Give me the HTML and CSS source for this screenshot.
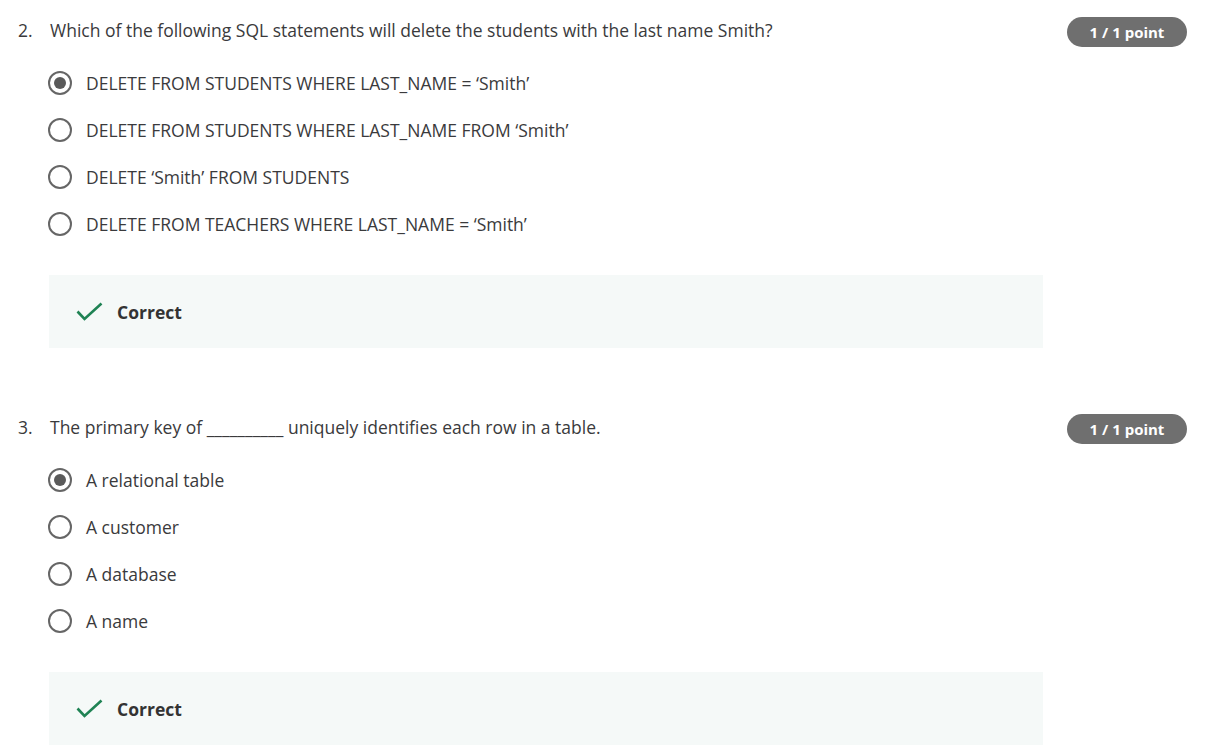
FILE: index.html
```html
<!DOCTYPE html>
<html>
<head>
<meta charset="utf-8">
<link rel="stylesheet" href="styles.css">
</head>
<body>
<div class="page">
  <section class="question">
    <div class="q-head">
      <span class="q-num">2.</span>
      <span class="q-text">Which of the following SQL statements will delete the students with the last name Smith?</span>
      <span class="badge">1 / 1 point</span>
    </div>
    <ul class="options">
      <li class="option"><span class="radio checked"></span><span class="opt-text">DELETE FROM STUDENTS WHERE LAST_NAME = ‘Smith’</span></li>
      <li class="option"><span class="radio"></span><span class="opt-text">DELETE FROM STUDENTS WHERE LAST_NAME FROM ‘Smith’</span></li>
      <li class="option"><span class="radio"></span><span class="opt-text">DELETE ‘Smith’ FROM STUDENTS</span></li>
      <li class="option"><span class="radio"></span><span class="opt-text">DELETE FROM TEACHERS WHERE LAST_NAME = ‘Smith’</span></li>
    </ul>
    <div class="feedback">
      <svg class="check" width="27" height="20" viewBox="0 0 27 20"><polyline points="1.5,9.5 8.5,17 25.5,1.5" fill="none" stroke="#1f8354" stroke-width="2.6"/></svg>
      <span class="fb-text">Correct</span>
    </div>
  </section>
  <section class="question">
    <div class="q-head">
      <span class="q-num">3.</span>
      <span class="q-text">The primary key of __________ uniquely identifies each row in a table.</span>
      <span class="badge">1 / 1 point</span>
    </div>
    <ul class="options">
      <li class="option"><span class="radio checked"></span><span class="opt-text">A relational table</span></li>
      <li class="option"><span class="radio"></span><span class="opt-text">A customer</span></li>
      <li class="option"><span class="radio"></span><span class="opt-text">A database</span></li>
      <li class="option"><span class="radio"></span><span class="opt-text">A name</span></li>
    </ul>
    <div class="feedback">
      <svg class="check" width="27" height="20" viewBox="0 0 27 20"><polyline points="1.5,9.5 8.5,17 25.5,1.5" fill="none" stroke="#1f8354" stroke-width="2.6"/></svg>
      <span class="fb-text">Correct</span>
    </div>
  </section>
</div>
</body>
</html>
```
FILE: styles.css
```css
html, body {
  margin: 0;
  padding: 0;
  background: #fff;
}
body {
  font-family: "Open Sans", "Liberation Sans", sans-serif;
  color: #3a3a3c;
}
.page {
  padding: 17px 44px 0 18px;
  display: flex;
  flex-direction: column;
  gap: 66px;
}
.q-head {
  display: flex;
  align-items: center;
  height: 30px;
}
.q-num {
  width: 32px;
  font-size: 17.5px;
  line-height: 24px;
  margin-top: -4px;
}
.q-text {
  flex: 1;
  font-size: 17.5px;
  line-height: 24px;
  margin-top: -4px;
}
.badge {
  width: 120px;
  height: 30px;
  border-radius: 15px;
  background: #6f6f6f;
  color: #fff;
  font-weight: 700;
  font-size: 15px;
  display: flex;
  align-items: center;
  justify-content: center;
}
.options {
  list-style: none;
  margin: 12px 0 0 30px;
  padding: 0;
}
.option {
  height: 47px;
  display: flex;
  align-items: center;
  gap: 14px;
}
.radio {
  width: 24px;
  height: 24px;
  box-sizing: border-box;
  border: 2.5px solid #666;
  border-radius: 50%;
  display: flex;
  align-items: center;
  justify-content: center;
}
.radio.checked::after {
  content: "";
  width: 12px;
  height: 12px;
  border-radius: 50%;
  background: #5a5a5a;
}
.opt-text {
  font-size: 17.5px;
  line-height: 22px;
}
.feedback {
  margin: 28px 0 0 31px;
  width: 994px;
  height: 73px;
  background: #f5f9f8;
  display: flex;
  align-items: center;
  padding-left: 27px;
  box-sizing: border-box;
  gap: 14px;
}
.check {
  display: block;
}
.fb-text {
  font-weight: 700;
  font-size: 17.5px;
  color: #333;
}
```
